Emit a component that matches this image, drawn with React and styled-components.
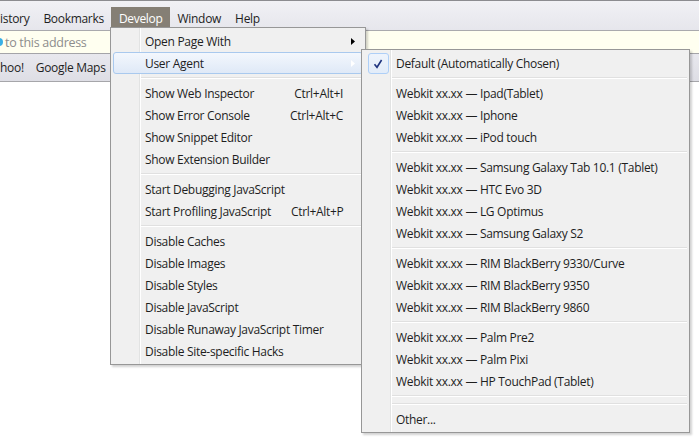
import React from 'react';
import styled, { createGlobalStyle } from 'styled-components';

const GlobalStyle = createGlobalStyle`
  body {
    margin: 0;
    background: #fff;
    font-family: "Open Sans", "Noto Sans", sans-serif;
    font-size: 12px;
    letter-spacing: -0.3px;
    color: #1e1e1e;
  }
`;

const Page = styled.div`
  position: relative;
  width: 699px;
  height: 440px;
  overflow: hidden;
  background: #fff;
`;

const MenuBar = styled.div`
  height: 28px;
  display: flex;
  align-items: flex-end;
  padding-bottom: 1px;
  border-top: 1px solid #8c8c90;
  border-bottom: 1px solid #a9a9ad;
  background: linear-gradient(#f1f1f5, #e6e6ec);
  margin-left: -7px;
`;

const MenuTitle = styled.div`
  height: 22px;
  display: flex;
  align-items: center;
  padding: 0 7px 0 ${p => (p.$active ? 8 : 7)}px;
  margin-right: ${p => (p.$active ? 1 : 0)}px;
  color: ${p => (p.$active ? '#fff' : '#1e1e1e')};
  background: ${p => (p.$active ? '#857f75' : 'transparent')};
`;

const AddressBar = styled.div`
  height: 22px;
  display: flex;
  align-items: center;
  gap: 2px;
  background: #fffff0;
  color: #8d8d8d;
  font-size: 12.5px;
  border-bottom: 1px solid #a4a4a8;
`;

const GoDot = styled.span`
  width: 8px;
  height: 8px;
  margin-left: -5px;
  border-radius: 50%;
  background: #3ab0e6;
`;

const BookmarksBar = styled.div`
  height: 27px;
  display: flex;
  align-items: center;
  gap: 12px;
  background: linear-gradient(#e8e8ee, #dedee5);
  border-bottom: 1px solid #a6a6aa;
`;

const Menu = styled.div`
  position: absolute;
  left: ${p => p.$left}px;
  top: ${p => p.$top}px;
  width: ${p => p.$width}px;
  box-sizing: border-box;
  padding: 2px;
  border: 1px solid #979797;
  background:
    linear-gradient(to right, transparent 28px, #e2e3e3 28px, #e2e3e3 29px, #fff 29px, #fff 30px, transparent 30px),
    #f0f0f0;
  box-shadow: 2px 2px 2px rgba(0, 0, 0, 0.18);
`;

const Item = styled.div`
  height: 22px;
  box-sizing: border-box;
  display: grid;
  grid-template-columns: 28px 1fr auto 19px;
  align-items: center;
  border: 1px solid ${p => (p.$hover ? '#a9c9ee' : 'transparent')};
  border-radius: 3px;
  background: ${p => (p.$hover ? 'linear-gradient(#f3f7fd, #dfe9f7)' : 'transparent')};
  white-space: nowrap;
`;

const Gutter = styled.span`
  display: flex;
  align-items: center;
  justify-content: center;
  height: 100%;
`;

const Label = styled.span`
  padding-left: 3px;
`;

const Shortcut = styled.span`
  padding-left: 20px;
`;

const ArrowSlot = styled.span`
  display: flex;
  align-items: center;
  justify-content: center;
`;

const CheckBox = styled.span`
  width: 21px;
  height: 21px;
  box-sizing: border-box;
  margin-left: -2px;
  display: flex;
  align-items: center;
  justify-content: center;
  border: 1px solid #aecff7;
  border-radius: 3px;
  background: linear-gradient(#eef4fc, #e2ecf9);
`;

const Separator = styled.div`
  height: 8px;
  margin-left: 28px;
  display: flex;
  flex-direction: column;
  justify-content: center;

  &::before {
    content: '';
    height: 1px;
    background: #e0e0e0;
  }
  &::after {
    content: '';
    height: 1px;
    background: #fff;
  }
`;

const Arrow = ({ color }) => (
  <svg width="4" height="7" viewBox="0 0 4 7">
    <path d="M0 0 L4 3.5 L0 7 Z" fill={color} />
  </svg>
);

const Check = () => (
  <svg width="10" height="10" viewBox="0 0 10 10">
    <path d="M1.5 5.2 L4 8.3 L8.6 1" fill="none" stroke="#1f347f" strokeWidth="1.6" />
  </svg>
);

const MenuItem = ({ label, shortcut, submenu, hover, checked }) => (
  <Item $hover={hover}>
    <Gutter>
      {checked && (
        <CheckBox>
          <Check />
        </CheckBox>
      )}
    </Gutter>
    <Label>{label}</Label>
    <Shortcut>{shortcut}</Shortcut>
    <ArrowSlot>{submenu && <Arrow color={hover ? '#fff' : '#000'} />}</ArrowSlot>
  </Item>
);

const developGroups = [
  [{ label: 'Open Page With', submenu: true }, { label: 'User Agent', submenu: true, hover: true }],
  [
    { label: 'Show Web Inspector', shortcut: 'Ctrl+Alt+I' },
    { label: 'Show Error Console', shortcut: 'Ctrl+Alt+C' },
    { label: 'Show Snippet Editor' },
    { label: 'Show Extension Builder' },
  ],
  [
    { label: 'Start Debugging JavaScript' },
    { label: 'Start Profiling JavaScript', shortcut: 'Ctrl+Alt+P' },
  ],
  [
    { label: 'Disable Caches' },
    { label: 'Disable Images' },
    { label: 'Disable Styles' },
    { label: 'Disable JavaScript' },
    { label: 'Disable Runaway JavaScript Timer' },
    { label: 'Disable Site-specific Hacks' },
  ],
];

const wk = name => ({ label: `Webkit xx.xx \u2014 ${name}` });

const agentGroups = [
  [{ label: 'Default (Automatically Chosen)', checked: true }],
  [wk('Ipad(Tablet)'), wk('Iphone'), wk('iPod touch')],
  [wk('Samsung Galaxy Tab 10.1 (Tablet)'), wk('HTC Evo 3D'), wk('LG Optimus'), wk('Samsung Galaxy S2')],
  [wk('RIM BlackBerry 9330/Curve'), wk('RIM BlackBerry 9350'), wk('RIM BlackBerry 9860')],
  [wk('Palm Pre2'), wk('Palm Pixi'), wk('HP TouchPad (Tablet)')],
  [],
  [{ label: 'Other...' }],
];

const renderGroups = groups =>
  groups.map((group, i) => (
    <React.Fragment key={i}>
      {i > 0 && <Separator />}
      {group.map(item => (
        <MenuItem key={item.label} {...item} />
      ))}
    </React.Fragment>
  ));

export default function App() {
  return (
    <Page>
      <GlobalStyle />
      <MenuBar>
        <MenuTitle>istory</MenuTitle>
        <MenuTitle>Bookmarks</MenuTitle>
        <MenuTitle $active>Develop</MenuTitle>
        <MenuTitle>Window</MenuTitle>
        <MenuTitle>Help</MenuTitle>
      </MenuBar>
      <AddressBar>
        <GoDot />
        to this address
      </AddressBar>
      <BookmarksBar>
        <span>hoo!</span>
        <span>Google Maps</span>
      </BookmarksBar>

      <Menu $left={110} $top={27} $width={256}>
        {renderGroups(developGroups)}
      </Menu>
      <Menu $left={361} $top={49} $width={329}>
        {renderGroups(agentGroups)}
      </Menu>
    </Page>
  );
}
